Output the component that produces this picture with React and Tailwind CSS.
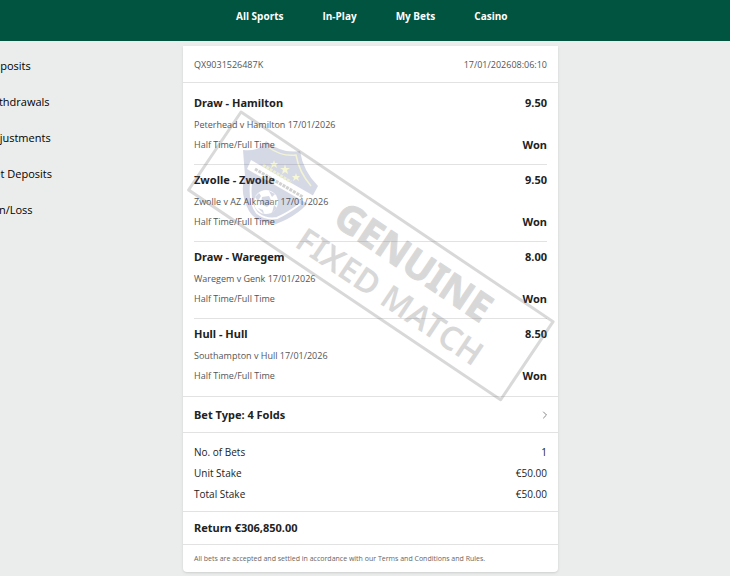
import { ChevronRight } from 'lucide-react'

const navLinks = ['All Sports', 'In-Play', 'My Bets', 'Casino']

const historyLinks = ['Deposits', 'Withdrawals', 'Adjustments', 'Net Deposits', 'Win/Loss']

const legs = [
  { pick: 'Draw - Hamilton', odds: '9.50', fixture: 'Peterhead v Hamilton 17/01/2026' },
  { pick: 'Zwolle - Zwolle', odds: '9.50', fixture: 'Zwolle v AZ Alkmaar 17/01/2026' },
  { pick: 'Draw - Waregem', odds: '8.00', fixture: 'Waregem v Genk 17/01/2026' },
  { pick: 'Hull - Hull', odds: '8.50', fixture: 'Southampton v Hull 17/01/2026' },
]

const totals = [
  ['No. of Bets', '1'],
  ['Unit Stake', '€50.00'],
  ['Total Stake', '€50.00'],
]

function Header() {
  return (
    <header className="h-[41px] bg-[#005440]">
      <nav className="ml-[236px] flex gap-[39px] pt-2 font-['Open_Sans',sans-serif] text-[10px] leading-[17px] font-bold whitespace-nowrap text-white">
        {navLinks.map((label) => (
          <a key={label} href="#">
            {label}
          </a>
        ))}
      </nav>
    </header>
  )
}

function Sidebar() {
  return (
    <aside className="-ml-[14px] pt-[7px] font-['Open_Sans',sans-serif] text-[11px] whitespace-nowrap text-black">
      {historyLinks.map((label) => (
        <a key={label} href="#" className="block leading-9">
          {label}
        </a>
      ))}
    </aside>
  )
}

function Leg({ leg }) {
  return (
    <li className="border-b border-[#e2e2e2] pt-[5px] pb-[9px] last:border-b-0">
      <div className="flex justify-between text-[11px] leading-5 font-bold">
        <h2>{leg.pick}</h2>
        <span>{leg.odds}</span>
      </div>
      <p className="mt-[2px] font-['Open_Sans',sans-serif] text-[9px] leading-5 text-[#555]">{leg.fixture}</p>
      <div className="flex justify-between leading-5">
        <span className="font-['Open_Sans',sans-serif] text-[9px] text-[#555]">Half Time/Full Time</span>
        <span className="text-[11px] font-bold">Won</span>
      </div>
    </li>
  )
}

function Crest() {
  return (
    <g opacity="0.22">
      <path
        d="M243 150 Q260 152 266 141 Q282 154 300 151 Q303 171 318 186 L312 197 Q302 214 276 224 Q256 223 249 211 Q239 192 245 176 Z"
        fill="#46538c"
      />
      <path d="M268 147 Q282 157 296 155 Q299 172 311 186" fill="none" stroke="#c9cf3f" strokeWidth="1.5" />
      <path d="M251 184 Q249 203 257 213 Q266 220 277 218 Q290 212 300 204" fill="none" stroke="#fff" strokeWidth="2" />
      <path d="M251 160 L314 196 L308 204 L247 169 Z" fill="#fff" />
      <circle cx="266" cy="202" r="12" fill="#fff" />
      <path
        d="M262 197 l7 -1 l3 6 l-5 5 l-6 -3z M255 197 l4 -4 l2 3 l-3 5z M269 191 l6 3 l-3 3z M274 205 l3 3 l-5 5z M258 208 l5 2 l1 4z"
        fill="#46538c"
      />
      <g fill="#d8dc45">
        <path d="M274 160 l1 3 h3 l-2 2 l1 3 l-3 -2 l-3 2 l1 -3 l-2 -2 h3z" />
        <path d="M285 164 l1 4 h4 l-3 2 l1 4 l-3 -2 l-3 2 l1 -4 l-3 -2 h4z" />
        <path d="M296 173 l1 3 h3 l-2 2 l1 3 l-3 -2 l-3 2 l1 -3 l-2 -2 h3z" />
      </g>
      <path d="M263 165 L291 182" stroke="#aeb82c" strokeWidth="3" strokeDasharray="3 1" />
      <path d="M255 169 L303 197" stroke="#333" strokeWidth="3" strokeDasharray="3 1" />
    </g>
  )
}

function Stamp() {
  return (
    <svg
      className="pointer-events-none absolute top-[60px] left-0 h-[300px] w-[375px]"
      viewBox="183 106 375 300"
      aria-hidden="true"
    >
      <Crest />
      <g transform="translate(241 112) rotate(33.9)" fill="#777" stroke="#777" strokeLinejoin="round" opacity="0.28">
        <rect width="376" height="94" fill="none" strokeWidth="3" />
        <text x="137" y="42" fontSize="39" strokeWidth="1" className="font-bold">
          GENUINE
        </text>
        <text x="118" y="82" fontSize="33" strokeWidth="0" className="font-semibold">
          FIXED MATCH
        </text>
      </g>
    </svg>
  )
}

export default function App() {
  return (
    <div className="min-h-screen overflow-hidden bg-[#ebedec] font-['Noto_Sans',sans-serif] text-[#222]">
      <Header />
      <div className="grid grid-cols-[183px_minmax(0,1fr)_172px]">
        <Sidebar />
        <main className="relative mt-[5px] mb-1 rounded-b-sm bg-white shadow-sm">
          <div className="flex justify-between border-b border-[#e2e2e2] px-[11px] pt-px font-['Open_Sans',sans-serif] text-[9px] leading-[35px] text-[#555]">
            <span>QX9031526487K</span>
            <span>17/01/202608:06:10</span>
          </div>
          <ul className="border-b border-[#e2e2e2] px-[11px] pt-[5px] pb-px">
            {legs.map((leg) => (
              <Leg key={leg.pick} leg={leg} />
            ))}
          </ul>
          <button
            type="button"
            className="flex w-full items-center justify-between border-b border-[#e2e2e2] px-[11px] text-[11px] leading-[35px] font-bold"
          >
            Bet Type: 4 Folds
            <ChevronRight className="-mr-1 size-3 text-[#888]" />
          </button>
          <dl className="border-b border-[#e2e2e2] px-[11px] pt-[9px] pb-[6px] font-['Open_Sans',sans-serif] text-[10px] leading-[21px]">
            {totals.map(([label, value]) => (
              <div key={label} className="flex justify-between">
                <dt>{label}</dt>
                <dd>{value}</dd>
              </div>
            ))}
          </dl>
          <p className="border-b border-[#e2e2e2] px-[11px] text-[11px] leading-8 font-bold">Return €306,850.00</p>
          <p className="px-[11px] font-['Open_Sans',sans-serif] text-[7px] leading-[27px] text-[#666]">
            All bets are accepted and settled in accordance with our Terms and Conditions and Rules.
          </p>
          <Stamp />
        </main>
      </div>
    </div>
  )
}
